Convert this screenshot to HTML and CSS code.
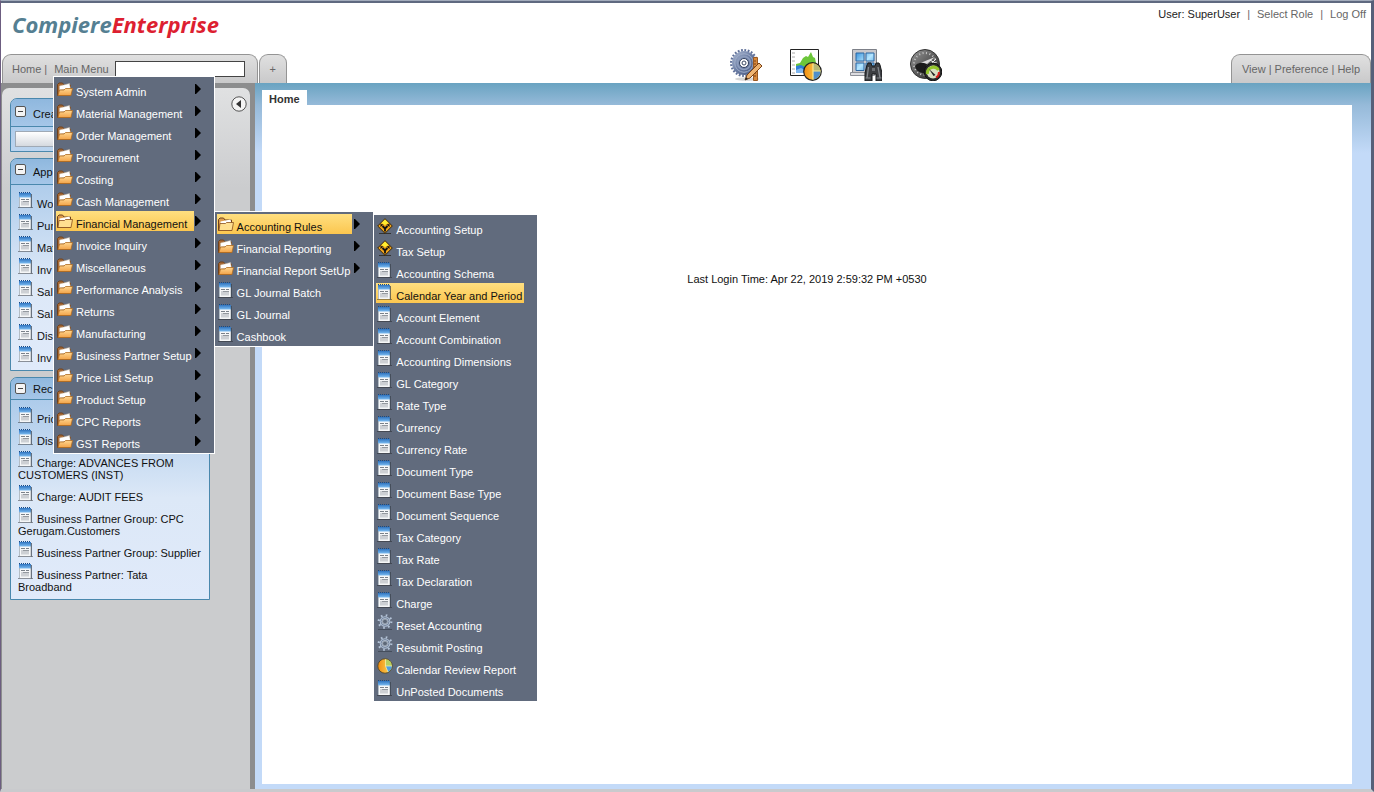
FILE: index.html
```html
<!DOCTYPE html>
<html lang="en">
<head>
<meta charset="utf-8">
<title>Compiere Enterprise</title>
<link rel="stylesheet" href="styles.css">
</head>
<body>
<svg class="sprite" aria-hidden="true">
  <defs>
    <linearGradient id="g-folder" x1="0" y1="0" x2="0" y2="1"><stop offset="0" stop-color="#ffd690"/><stop offset="1" stop-color="#f2a348"/></linearGradient>
    <linearGradient id="g-cap" x1="0" y1="0" x2="0" y2="1"><stop offset="0" stop-color="#2f74c0"/><stop offset="1" stop-color="#7bbcf2"/></linearGradient>
    <linearGradient id="g-pie" x1="0" y1="0" x2="1" y2="0"><stop offset="0" stop-color="#f08c10"/><stop offset="1" stop-color="#ffe060"/></linearGradient>
    <linearGradient id="g-gear" x1="0" y1="0" x2="1" y2="1"><stop offset="0" stop-color="#aebbd4"/><stop offset="0.5" stop-color="#6a7ca3"/><stop offset="1" stop-color="#43547c"/></linearGradient>
    <linearGradient id="g-dial" x1="0" y1="0" x2="1" y2="1"><stop offset="0" stop-color="#9a9a9a"/><stop offset="0.5" stop-color="#5c5c5c"/><stop offset="1" stop-color="#222"/></linearGradient>
    <linearGradient id="g-glass" x1="0" y1="0" x2="1" y2="1"><stop offset="0" stop-color="#3b95dd"/><stop offset="0.5" stop-color="#b5e6ff"/><stop offset="1" stop-color="#3b95dd"/></linearGradient>
  </defs>
  <symbol id="folder" viewBox="0 0 16 16">
    <path d="M.5 14.500V3.500L2 2h3.500L7 4h6.500v10.500z" fill="#a96a35" stroke="#70421c"/>
    <path d="M2.500 9V5l10-2.500L13.500 8z" fill="#fff" stroke="#c9b8a2" stroke-width=".5"/>
    <path d="M1 14.500 2.500 9H7l1.500-1.500h7L14 14.500z" fill="url(#g-folder)" stroke="#b06c22" stroke-width=".8"/>
  </symbol>
  <symbol id="folder-open" viewBox="0 0 16 16">
    <path d="M.5 14.500V3.500L2 2h3.500L7 4h6.500v10.500z" fill="#dd9c4c" stroke="#70421c"/>
    <path d="M2.500 9V5.500l10-2L13.500 8z" fill="#fff"/>
    <path d="M1 14.500 2 7.500h5.500l1-1h7L14 14.500z" fill="#ffdf90" stroke="#8a4f1c" stroke-width=".8"/>
  </symbol>
  <symbol id="window" viewBox="0 0 16 16">
    <path d="M0 15.500h15" stroke="#222" stroke-opacity=".45"/>
    <path d="M1 2h12v13H1z" fill="#f6f7f8"/>
    <path d="M1 1h12v4.500H1z" fill="url(#g-cap)"/>
    <path d="M1 .5h12" stroke="#174a85" stroke-dasharray="1 1"/>
    <path d="M3 7.500h4M8 7.500h3" stroke="#5a626c" stroke-width=".8"/>
    <path d="M3 9h8v4.500H3z" fill="#cdd0d4"/>
    <path d="M5 9.500h6" stroke="#7b8188" stroke-width=".7"/>
    <path d="M1.500 5v10" stroke="#98a3af" stroke-width=".7"/>
    <path d="M13.300 2v13.500" stroke="#3b434e" stroke-width=".9"/>
  </symbol>
  <symbol id="sign" viewBox="0 0 16 16">
    <path d="M2 15.500h12" stroke="#333"/>
    <path d="M8 .7 15.300 8 8 15.300.7 8z" fill="#f2a51a" stroke="#352408"/>
    <path d="M8 1.500 11.500 5 8 7 4.500 5z" fill="#ffee30"/>
    <path d="M8 13.500V10M8 10.500 5.500 8M8 10.500l2.500-2.500" stroke="#111" stroke-width="1.800" fill="none"/>
    <path d="M3.500 9V6l3 .5zM12.500 9V6l-3 .5z" fill="#111"/>
  </symbol>
  <symbol id="gear" viewBox="0 0 16 16">
    <path d="M1 15.500h14" stroke="#39424f" stroke-opacity=".7"/>
    <circle cx="8" cy="7.500" r="6.300" fill="none" stroke="#b4c4d8" stroke-width="2.200" stroke-dasharray="1.600 3.348"/>
    <circle cx="8" cy="7.500" r="4" fill="none" stroke="#b4c4d8" stroke-width="2.600"/>
    <circle cx="8" cy="7.500" r="4" fill="none" stroke="#66758d" stroke-width=".8"/>
    <circle cx="8" cy="7.500" r="2.400" fill="#5d6878" stroke="#dfe6ef" stroke-width=".5"/>
  </symbol>
  <symbol id="pie" viewBox="0 0 16 16">
    <circle cx="8" cy="8" r="7.200" fill="url(#g-pie)" stroke="#4d4020" stroke-width=".8"/>
    <path d="M8.500 8V1.200A6.800 6.800 0 0 1 14.800 8z" fill="#b5cf60"/>
    <path d="M8.500 8h6.300A6.800 6.800 0 0 1 11 14z" fill="#4e9fe0"/>
    <path d="M8.500 1.200V8l2.500 6M8.500 8h6.500" stroke="#fff5b0" stroke-width=".7" fill="none"/>
  </symbol>
  <symbol id="arrow" viewBox="0 0 6 10"><path d="M0 0h1l5 5-5 5H0z" fill="#000"/></symbol>
</svg>

<div class="app">
  <header class="masthead">
    <a class="logo" href="#"><span class="logo-a">Compiere</span><span class="logo-b">Enterprise</span></a>
    <nav class="account"><span class="user">User: SuperUser</span><span>|</span><a href="#">Select Role</a><span>|</span><a href="#">Log Off</a></nav>
  </header>

  <div class="tabbar">
    <div class="tabs">
      <div class="tab tab-main">
        <a href="#">Home</a><span class="bar">|</span><a href="#">Main Menu</a>
        <input class="search" type="text" aria-label="Search menu">
        <ul class="menu menu-root">
          <li><a href="#"><svg><use href="#folder"/></svg>System Admin</a><svg class="arrow"><use href="#arrow"/></svg></li>
          <li><a href="#"><svg><use href="#folder"/></svg>Material Management</a><svg class="arrow"><use href="#arrow"/></svg></li>
          <li><a href="#"><svg><use href="#folder"/></svg>Order Management</a><svg class="arrow"><use href="#arrow"/></svg></li>
          <li><a href="#"><svg><use href="#folder"/></svg>Procurement</a><svg class="arrow"><use href="#arrow"/></svg></li>
          <li><a href="#"><svg><use href="#folder"/></svg>Costing</a><svg class="arrow"><use href="#arrow"/></svg></li>
          <li><a href="#"><svg><use href="#folder"/></svg>Cash Management</a><svg class="arrow"><use href="#arrow"/></svg></li>
          <li><a href="#" class="active"><svg><use href="#folder-open"/></svg>Financial Management</a><svg class="arrow"><use href="#arrow"/></svg>
            <ul class="menu submenu">
              <li><a href="#" class="active"><svg><use href="#folder-open"/></svg>Accounting Rules</a><svg class="arrow"><use href="#arrow"/></svg>
                <ul class="menu submenu leaf">
                  <li><a href="#"><svg><use href="#sign"/></svg>Accounting Setup</a></li>
                  <li><a href="#"><svg><use href="#sign"/></svg>Tax Setup</a></li>
                  <li><a href="#"><svg><use href="#window"/></svg>Accounting Schema</a></li>
                  <li><a href="#" class="active"><svg><use href="#window"/></svg>Calendar Year and Period</a></li>
                  <li><a href="#"><svg><use href="#window"/></svg>Account Element</a></li>
                  <li><a href="#"><svg><use href="#window"/></svg>Account Combination</a></li>
                  <li><a href="#"><svg><use href="#window"/></svg>Accounting Dimensions</a></li>
                  <li><a href="#"><svg><use href="#window"/></svg>GL Category</a></li>
                  <li><a href="#"><svg><use href="#window"/></svg>Rate Type</a></li>
                  <li><a href="#"><svg><use href="#window"/></svg>Currency</a></li>
                  <li><a href="#"><svg><use href="#window"/></svg>Currency Rate</a></li>
                  <li><a href="#"><svg><use href="#window"/></svg>Document Type</a></li>
                  <li><a href="#"><svg><use href="#window"/></svg>Document Base Type</a></li>
                  <li><a href="#"><svg><use href="#window"/></svg>Document Sequence</a></li>
                  <li><a href="#"><svg><use href="#window"/></svg>Tax Category</a></li>
                  <li><a href="#"><svg><use href="#window"/></svg>Tax Rate</a></li>
                  <li><a href="#"><svg><use href="#window"/></svg>Tax Declaration</a></li>
                  <li><a href="#"><svg><use href="#window"/></svg>Charge</a></li>
                  <li><a href="#"><svg><use href="#gear"/></svg>Reset Accounting</a></li>
                  <li><a href="#"><svg><use href="#gear"/></svg>Resubmit Posting</a></li>
                  <li><a href="#"><svg><use href="#pie"/></svg>Calendar Review Report</a></li>
                  <li><a href="#"><svg><use href="#window"/></svg>UnPosted Documents</a></li>
                </ul>
              </li>
              <li><a href="#"><svg><use href="#folder"/></svg>Financial Reporting</a><svg class="arrow"><use href="#arrow"/></svg></li>
              <li><a href="#"><svg><use href="#folder"/></svg>Financial Report SetUp</a><svg class="arrow"><use href="#arrow"/></svg></li>
              <li><a href="#"><svg><use href="#window"/></svg>GL Journal Batch</a></li>
              <li><a href="#"><svg><use href="#window"/></svg>GL Journal</a></li>
              <li><a href="#"><svg><use href="#window"/></svg>Cashbook</a></li>
            </ul>
          </li>
          <li><a href="#"><svg><use href="#folder"/></svg>Invoice Inquiry</a><svg class="arrow"><use href="#arrow"/></svg></li>
          <li><a href="#"><svg><use href="#folder"/></svg>Miscellaneous</a><svg class="arrow"><use href="#arrow"/></svg></li>
          <li><a href="#"><svg><use href="#folder"/></svg>Performance Analysis</a><svg class="arrow"><use href="#arrow"/></svg></li>
          <li><a href="#"><svg><use href="#folder"/></svg>Returns</a><svg class="arrow"><use href="#arrow"/></svg></li>
          <li><a href="#"><svg><use href="#folder"/></svg>Manufacturing</a><svg class="arrow"><use href="#arrow"/></svg></li>
          <li><a href="#"><svg><use href="#folder"/></svg>Business Partner Setup</a><svg class="arrow"><use href="#arrow"/></svg></li>
          <li><a href="#"><svg><use href="#folder"/></svg>Price List Setup</a><svg class="arrow"><use href="#arrow"/></svg></li>
          <li><a href="#"><svg><use href="#folder"/></svg>Product Setup</a><svg class="arrow"><use href="#arrow"/></svg></li>
          <li><a href="#"><svg><use href="#folder"/></svg>CPC Reports</a><svg class="arrow"><use href="#arrow"/></svg></li>
          <li><a href="#"><svg><use href="#folder"/></svg>GST Reports</a><svg class="arrow"><use href="#arrow"/></svg></li>
        </ul>
      </div>
      <button class="tab tab-add" type="button">+</button>
    </div>

    <div class="tools">
      <button type="button" aria-label="Processes">
        <svg viewBox="0 0 32 32">
          <ellipse cx="17" cy="30" rx="12" ry="1.800" fill="#999" opacity=".4"/>
          <circle cx="14" cy="14" r="12.800" fill="none" stroke="#5f7099" stroke-width="2.400" stroke-dasharray="1.800 1.550"/>
          <circle cx="14" cy="14" r="12" fill="url(#g-gear)"/>
          <circle cx="14" cy="14" r="9.300" fill="none" stroke="#9fadc9" stroke-width="1"/>
          <circle cx="14" cy="14" r="6.500" fill="none" stroke="#8d9dbd" stroke-width="1.500"/>
          <circle cx="14" cy="14" r="4.500" fill="#fff" stroke="#33415f"/>
          <circle cx="14" cy="14" r="2" fill="#fff" stroke="#39465f" stroke-width="1"/>
          <path d="M23.500 8.500h4v23h-4z" fill="#d8893c" stroke="#9a5a22"/>
          <path d="M24 12h2M24 15h2M24 18h2M24 21h2M24 24h2M24 27h2" stroke="#7a4216"/>
          <path d="m15 31 2-5L29 14l3 3-12 12z" fill="#efb471" stroke="#7a4216"/>
          <path d="m15 31 1-3 2 2z" fill="#222"/>
        </svg>
      </button>
      <button type="button" aria-label="Reports">
        <svg viewBox="0 0 32 32">
          <path d="M.5.500h28v26H.5z" fill="#fff" stroke="#222"/>
          <path d="M2 4h3M2 8h3M2 12h3M2 16h3M2 20h3M2 24h3" stroke="#aaa"/>
          <path d="M6 15l4-1 3-5 3-2 2 1 3-5 2 5 2 1 1 5v10H6z" fill="#6cc63a"/>
          <path d="M6 17l5-1 4 2 4-3 3 2 4-2v9H6z" fill="#2d7fd8"/>
          <path d="M6 21l5-2 4 2 5-3v6H6z" fill="#7fb6ee"/>
          <circle cx="22.500" cy="22.500" r="8.800" fill="url(#g-pie)" stroke="#222" stroke-width="1.200"/>
          <path d="M23 22V14.500A8 8 0 0 1 30.500 22z" fill="#b5b877"/>
          <path d="M23 22h7.500A8 8 0 0 1 23 30.500z" fill="#4f8fca"/>
          <path d="M23 14.500v16M23 22h7.500" stroke="#ffe78a" stroke-width="1.200"/>
        </svg>
      </button>
      <button type="button" aria-label="Windows">
        <svg viewBox="0 0 32 32">
          <path d="M2.500.500h24v23h-24z" fill="#c8c8cc" stroke="#7d8088"/>
          <path d="M.5 23.500h24v3H.5z" fill="#dcdce0" stroke="#8d9098"/>
          <path d="M6 4h8v8H6zM16 4h8v8h-8zM6 14h8v7.500H6zM16 14h8v7.500h-8z" fill="url(#g-glass)" stroke="#2b66a3"/>
          <path d="M17 16l1-2h3l1 3h3l1-3h3l1 2 2 8v8h-6v-7h-4v7h-7v-8z" fill="#3d3f43" stroke="#17181a"/>
          <path d="M18.500 18 17 29M28 18l2 11" stroke="#85888d" stroke-width="1.300"/>
          <path d="M15.500 29h5M26.500 29h5" stroke="#85888d"/>
          <path d="M22 19h3v3h-3z" fill="#6c6f74"/>
        </svg>
      </button>
      <button type="button" aria-label="Dashboard">
        <svg viewBox="0 0 32 32">
          <circle cx="15" cy="15" r="14.500" fill="url(#g-dial)" stroke="#333"/>
          <circle cx="15" cy="15" r="11" fill="none" stroke="#c7c7c7" stroke-width="2" stroke-dasharray="1 2.500"/>
          <path d="M8 15 25 8 17 15z" fill="#ddd"/>
          <path d="M20 11l5 3M22 14l4-4" stroke="#eee"/>
          <path d="M5 17c3-4 7-4 12-2l-3 9c-4 0-8-2-9-7z" fill="#1b1b1b"/>
          <circle cx="23" cy="23" r="8.800" fill="#2a2a2a" stroke="#111"/>
          <circle cx="23" cy="23" r="6.500" fill="#d9dfc4"/>
          <path d="M17.500 25a6 6 0 0 1 11-4" fill="none" stroke="#93c52c" stroke-width="3"/>
          <path d="M29 23a6 6 0 0 1-3 5.500" fill="none" stroke="#d8201c" stroke-width="2"/>
          <path d="m19 20 6.500 6-2 1z" fill="#222"/>
        </svg>
      </button>
    </div>

    <nav class="tab tab-right"><a href="#">View</a> | <a href="#">Preference</a> | <a href="#">Help</a></nav>
  </div>

  <div class="body">
    <div class="rail">
    <aside class="sidebar">
      <div class="panels">
        <section class="panel tall">
          <h2><button class="toggle" type="button" aria-label="Collapse first panel"></button>Crea</h2>
          <div class="panel-action"><button type="button" aria-label="Choose"></button></div>
        </section>
        <section class="panel">
          <h2><button class="toggle" type="button" aria-label="Collapse second panel"></button>App</h2>
          <ul class="links">
            <li><a href="#"><svg><use href="#window"/></svg>Wo</a></li>
            <li><a href="#"><svg><use href="#window"/></svg>Pur</a></li>
            <li><a href="#"><svg><use href="#window"/></svg>Mat</a></li>
            <li><a href="#"><svg><use href="#window"/></svg>Inv</a></li>
            <li><a href="#"><svg><use href="#window"/></svg>Sal</a></li>
            <li><a href="#"><svg><use href="#window"/></svg>Sal</a></li>
            <li><a href="#"><svg><use href="#window"/></svg>Dis</a></li>
            <li><a href="#"><svg><use href="#window"/></svg>Inv</a></li>
          </ul>
        </section>
        <section class="panel compact">
          <h2><button class="toggle" type="button" aria-label="Collapse third panel"></button>Rec</h2>
          <ul class="links">
            <li><a href="#"><svg><use href="#window"/></svg>Pric</a></li>
            <li><a href="#"><svg><use href="#window"/></svg>Dis</a></li>
            <li><a href="#"><svg><use href="#window"/></svg>Charge: ADVANCES FROM CUSTOMERS (INST)</a></li>
            <li><a href="#"><svg><use href="#window"/></svg>Charge: AUDIT FEES</a></li>
            <li><a href="#"><svg><use href="#window"/></svg>Business Partner Group: CPC Gerugam.Customers</a></li>
            <li><a href="#"><svg><use href="#window"/></svg>Business Partner Group: Supplier</a></li>
            <li><a href="#"><svg><use href="#window"/></svg>Business Partner: Tata Broadband</a></li>
          </ul>
        </section>
      </div>
      <button class="collapse" type="button" aria-label="Hide sidebar"><svg viewBox="0 0 16 16"><circle cx="8" cy="8" r="7.200" fill="#f4f4f4" stroke="#555"/><path d="M10 4v8L5 8z" fill="#333"/></svg></button>
    </aside>
    </div>
    <main class="workspace">
      <a class="page-tab" href="#">Home</a>
      <div class="page"><p>Last Login Time: Apr 22, 2019 2:59:32 PM +0530</p></div>
    </main>
  </div>
</div>
</body>
</html>
```
FILE: styles.css
```css
* { box-sizing: border-box; }

body {
  margin: 0;
  font: 11px/12px "Liberation Sans", Arial, sans-serif;
  color: #111;
  background: #fff;
}

a { color: inherit; text-decoration: none; }
ul { list-style: none; margin: 0; padding: 0; }
button { font: inherit; color: inherit; padding: 0; border: 0; background: none; }
.sprite { position: absolute; width: 0; height: 0; }

.app {
  display: flex;
  flex-direction: column;
  min-height: 100vh;
  border-top: 1px solid #a3acbc;
  border-left: 1px solid #6c5d80;
  border-right: 3px solid #566079;
  border-bottom: 3px solid #c9cacd;
}

/* Masthead */
.masthead {
  display: flex;
  justify-content: space-between;
  align-items: flex-start;
  height: 53px;
  padding: 5px 5px 0 11px;
  border-top: 2px solid #5f6980;
}
.logo {
  font: italic 700 22px/32px "Open Sans", "Noto Sans", sans-serif;
}
.logo-a { color: #557f92; }
.logo-b { color: #dd1f31; }
.account { display: flex; gap: 7px; color: #666; }
.user { color: #222; }

/* Tab bar */
.tabbar {
  display: grid;
  grid-template-columns: auto 20fr auto 13fr auto;
  align-items: end;
  padding-left: 1px;
}
.tabs { display: flex; gap: 1px; }
.tab {
  height: 29px;
  border: 1px solid #949494;
  border-bottom: 0;
  border-radius: 9px 9px 0 0;
  background: linear-gradient(#e0e0e0, #c9c9ca);
  color: #666;
}
.tab-main {
  position: relative;
  display: flex;
  align-items: center;
  padding: 0 12px 0 9px;
}
.bar { margin: 0 7px 0 3px; }
.search {
  width: 130px;
  height: 16px;
  margin-left: 6px;
  padding: 0 2px;
  border: 1px solid #444;
  background: #fff;
  font: inherit;
}
.tab-add { width: 28px; }
.tools { grid-column: 3; display: flex; gap: 28px; margin-top: -5px; padding-bottom: 2px; }
.tools button, .tools svg { display: block; width: 32px; height: 32px; }
.tab-right { grid-column: 5; padding: 8px 10px 0; }

/* Cascading menus */
.menu {
  position: absolute;
  z-index: 1;
  display: grid;
  gap: 2px;
  padding: 2px;
  width: max-content;
  border: 1px solid #fff;
  background: #616b7d;
  color: #fff;
}
.menu li { position: relative; display: flex; height: 20px; padding-right: 19px; }
.menu-root { left: 50px; top: 21px; }
.menu.menu-root > li { padding-right: 18px; }
.submenu { left: calc(100% + 2px); top: 0; }
.menu.leaf > li { padding-right: 11px; }
.menu a {
  display: flex;
  flex: 1;
  gap: 3px;
  padding: 0 2px 0 1px;
  line-height: 26px;
  height: 20px;
}
.menu a svg { width: 16px; height: 16px; margin-top: 2px; }
.menu.leaf a svg { margin-top: 1px; }
.menu .active { background: linear-gradient(#ffdf80, #fbc64f); color: #111; }
.menu .arrow { position: absolute; right: 11px; top: 5px; width: 6px; height: 10px; }

/* Body */
.body { display: flex; flex: 1; }
.rail { display: flex; width: 254px; padding: 5px 5px 0 1px; background: #8c8d8e; }
.sidebar {
  display: flex;
  flex: 1;
  justify-content: space-between;
  align-items: flex-start;
  padding: 8px 3px 0 8px;
  border-radius: 7px 7px 0 0;
  background: linear-gradient(#e0e1e2, #cbccce 100px);
}
.collapse { width: 16px; height: 16px; }
.collapse svg { display: block; }
.panels { display: flex; flex-direction: column; gap: 6px; width: 200px; padding-top: 2px; }
.panel {
  border: 1px solid #4a88ad;
  border-radius: 7px 7px 0 0;
  background: linear-gradient(#a3c5e8, #dce8f7 120px, #e0eafa);
}
.panel h2 {
  display: flex;
  align-items: flex-start;
  gap: 7px;
  height: 26px;
  margin: 0;
  padding: 5px 4px 0;
  border-bottom: 1px solid #4a88ad;
  border-radius: 6px 6px 0 0;
  background: linear-gradient(#8fb8de, #a5c6e8);
  font: inherit;
  line-height: 16px;
}
.panel.tall h2 { height: 28px; padding-top: 7px; }
.panel.compact h2 { height: 22px; line-height: 12px; }
.toggle {
  width: 11px;
  height: 11px;
  border: 1px solid #555;
  border-radius: 2px;
  background: linear-gradient(#444, #444) center / 5px 1px no-repeat #f4f4f4;
}
.panel-action { padding: 4px; }
.panel-action button {
  display: block;
  width: 100%;
  height: 16px;
  border: 1px solid #9fa9b5;
  background: linear-gradient(#fff, #d5d9df);
}
.links { padding: 7px 7px 2px; }
.links li { margin-bottom: 4px; }
.links svg { width: 16px; height: 16px; margin-right: 3px; }

.workspace {
  display: flex;
  flex: 1;
  flex-direction: column;
  align-items: flex-start;
  padding: 7px 19px 5px 7px;
  background: linear-gradient(#69a3c1, #96bad9 22px, #c3daf8 70px);
}
.page-tab { padding: 3px 7px 0; height: 15px; background: #fff; font-weight: bold; color: #333; }
.page { flex: 1; align-self: stretch; padding-top: 168px; background: #fff; text-align: center; }
.page p { margin: 0; }
```
